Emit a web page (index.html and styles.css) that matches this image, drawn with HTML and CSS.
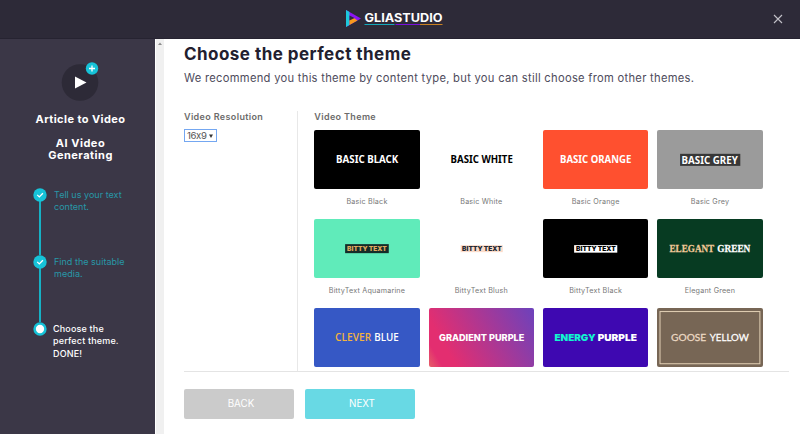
FILE: index.html
```html
<!DOCTYPE html>
<html lang="en">
<head>
<meta charset="utf-8">
<title>GliaStudio</title>
<link rel="stylesheet" href="styles.css">
</head>
<body>
<header class="topbar">
  <svg class="logo" width="98" height="18" viewBox="0 0 98 18">
    <path d="M0 0L15 8.5L0 17Z" fill="#8b14f5"/>
    <path d="M0 0L3.5 2V15L0 17Z" fill="#1cc8dc"/>
    <path d="M3.5 10L8 8L11.5 10.5L3.5 15Z" fill="#f79a1c"/>
    <path d="M3.5 5.5L8.5 8L3.5 10.5Z" fill="#2d2a38"/>
    <text x="18.5" y="11.8" class="logo-text" textLength="78" lengthAdjust="spacingAndGlyphs">GLIASTUDIO</text>
    <path d="M18.5 14.500h30" stroke="#15a9bb"/>
    <path d="M49.500 14.500h24.500" stroke="#7a10dc"/>
    <path d="M74 14.500h22.500" stroke="#c98122"/>
  </svg>
  <svg class="close" width="10" height="10" viewBox="0 0 10 10"><path d="M1 1L9 9M9 1L1 9" stroke="#c2c1c8" stroke-width="1.100"/></svg>
</header>
<div class="body">
  <aside class="sidebar">
    <svg class="badge" width="38" height="40" viewBox="0 0 38 40">
      <circle cx="19" cy="21.500" r="18.300" fill="#2d2a37"/>
      <path d="M14 15.500L25.500 21.500L14 27.500Z" fill="#fff"/>
      <circle cx="31" cy="7.500" r="6.200" fill="#16c3d8"/>
      <path d="M28 7.500h6M31 4.500v6" stroke="#fff" stroke-width="1.300"/>
    </svg>
    <h2 class="kind">Article to Video</h2>
    <h2 class="mode">AI Video<br>Generating</h2>
    <ol class="steps">
      <li class="step">
        <svg class="dot" width="14" height="14" viewBox="0 0 14 14"><circle cx="7" cy="7" r="6.700" fill="#16c3d8"/><path d="M4.200 6.900L6.300 8.900L9.900 5.200" fill="none" stroke="#fff" stroke-width="1.300"/></svg>
        <span>Tell us your text<br>content.</span>
      </li>
      <li class="step">
        <svg class="dot" width="14" height="14" viewBox="0 0 14 14"><circle cx="7" cy="7" r="6.700" fill="#16c3d8"/><path d="M4.200 6.900L6.300 8.900L9.900 5.200" fill="none" stroke="#fff" stroke-width="1.300"/></svg>
        <span>Find the suitable<br>media.</span>
      </li>
      <li class="step current">
        <svg class="dot" width="14" height="14" viewBox="0 0 14 14"><circle cx="7" cy="7" r="5.400" fill="#fff" stroke="#16c3d8" stroke-width="2.500"/></svg>
        <span>Choose the<br>perfect theme.<br>DONE!</span>
      </li>
    </ol>
  </aside>
  <div class="scrollbar"><svg width="4" height="3" viewBox="0 0 4 3"><path d="M0 3L2 .5L4 3Z" fill="#8c8c8c"/></svg></div>
  <main class="main">
    <h1 class="title">Choose the perfect theme</h1>
    <p class="lead">We recommend you this theme by content type, but you can still choose from other themes.</p>
    <div class="panel">
      <section class="resolution">
        <h3 class="label">Video Resolution</h3>
        <div class="select"><span>16x9</span><svg width="4" height="4" viewBox="0 0 4 4"><path d="M0 .5H4L2 4Z" fill="#333"/></svg></div>
      </section>
      <section class="themes">
        <h3 class="label">Video Theme</h3>
        <div class="grid">
          <figure class="card"><svg class="thumb black" viewBox="0 0 105 59"><text class="basic" x="22" y="33" textLength="62" lengthAdjust="spacingAndGlyphs">BASIC BLACK</text></svg><figcaption>Basic Black</figcaption></figure>
          <figure class="card"><svg class="thumb white" viewBox="0 0 105 59"><text class="basic ink" x="21.500" y="33" textLength="62" lengthAdjust="spacingAndGlyphs">BASIC WHITE</text></svg><figcaption>Basic White</figcaption></figure>
          <figure class="card"><svg class="thumb orange" viewBox="0 0 105 59"><text class="basic" x="17" y="33" textLength="71" lengthAdjust="spacingAndGlyphs">BASIC ORANGE</text></svg><figcaption>Basic Orange</figcaption></figure>
          <figure class="card"><svg class="thumb grey" viewBox="0 0 105 59"><rect x="23" y="23.700" width="60" height="12" fill="#373737"/><text class="basic" x="24.500" y="33.700" textLength="56" lengthAdjust="spacingAndGlyphs">BASIC GREY</text></svg><figcaption>Basic Grey</figcaption></figure>
          <figure class="card"><svg class="thumb aqua" viewBox="0 0 105 59"><rect x="31" y="25" width="43.500" height="9" fill="#152c29"/><text class="bitty" x="33" y="32" fill="#dfa95e" textLength="39.500" lengthAdjust="spacingAndGlyphs">BITTY TEXT</text></svg><figcaption>BittyText Aquamarine</figcaption></figure>
          <figure class="card"><svg class="thumb white" viewBox="0 0 105 59"><rect x="31.500" y="26" width="42" height="7" fill="#fbdccb"/><text class="bitty" x="33" y="32" fill="#222831" textLength="39.500" lengthAdjust="spacingAndGlyphs">BITTY TEXT</text></svg><figcaption>BittyText Blush</figcaption></figure>
          <figure class="card"><svg class="thumb black" viewBox="0 0 105 59"><rect x="31" y="26" width="43" height="7.500" fill="#fff"/><text class="bitty" x="33" y="32" fill="#000" textLength="39.500" lengthAdjust="spacingAndGlyphs">BITTY TEXT</text></svg><figcaption>BittyText Black</figcaption></figure>
          <figure class="card"><svg class="thumb green" viewBox="0 0 105 59"><text class="elegant" x="12.500" y="32.800" fill="#f1c998" stroke="#f1c998" textLength="44.500" lengthAdjust="spacingAndGlyphs">ELEGANT</text><text class="elegant" x="60" y="32.800" fill="#fff" stroke="#fff" textLength="33" lengthAdjust="spacingAndGlyphs">GREEN</text></svg><figcaption>Elegant Green</figcaption></figure>
          <figure class="card"><svg class="thumb blue" viewBox="0 0 105 59"><text class="clever" x="21" y="33" fill="#f3b33d" textLength="36" lengthAdjust="spacingAndGlyphs">CLEVER</text><text class="clever" x="60" y="33" fill="#fff" textLength="24.500" lengthAdjust="spacingAndGlyphs">BLUE</text></svg></figure>
          <figure class="card"><svg class="thumb gradient" viewBox="0 0 105 59"><text class="heavy" x="10" y="33" fill="#fff" textLength="85" lengthAdjust="spacingAndGlyphs">GRADIENT PURPLE</text></svg></figure>
          <figure class="card"><svg class="thumb purple" viewBox="0 0 105 59"><text class="energy" x="11.500" y="33" fill="#12f5cf" textLength="41" lengthAdjust="spacingAndGlyphs">ENERGY</text><text class="energy" x="54.500" y="33" fill="#fff" textLength="39" lengthAdjust="spacingAndGlyphs">PURPLE</text></svg></figure>
          <figure class="card"><svg class="thumb goose" viewBox="0 0 105 59"><rect x="3" y="3.500" width="99.500" height="52" fill="none" stroke="#e2d0b5"/><text class="light" x="14" y="33" fill="#eddac4" stroke="#eddac4" textLength="35" lengthAdjust="spacingAndGlyphs">GOOSE</text><text class="light" x="52.500" y="33" fill="#fff" stroke="#fff" textLength="39" lengthAdjust="spacingAndGlyphs">YELLOW</text></svg></figure>
        </div>
      </section>
    </div>
    <div class="actions">
      <button class="btn back">BACK</button>
      <button class="btn next">NEXT</button>
    </div>
  </main>
</div>
</body>
</html>
```
FILE: styles.css
```css
* { box-sizing: border-box; margin: 0; padding: 0; }
body { width: 800px; height: 434px; overflow: hidden; background: #fff; font-family: Inter, "Open Sans", sans-serif; color: #4b4a55; }
svg { display: block; }
.topbar { height: 39px; background: #2d2a38; border-bottom: 1px solid #262331; display: grid; grid-template-columns: 346px 1fr 27px; align-items: center; }
.logo { grid-column: 2; overflow: visible; }
.logo-text { font: 700 11.6px Inter, sans-serif; fill: #fff; }
.close { grid-column: 3; }
.body { display: flex; height: 395px; }
.sidebar { width: 155px; background: #3b3747; color: #fff; }
.badge { margin: 22px 0 0 61px; }
.kind, .mode { font-size: 11px; line-height: 12px; font-weight: 700; text-align: center; padding-left: 6px; }
.kind { margin-top: 12px; letter-spacing: .42px; }
.mode { margin-top: 12px; letter-spacing: .5px; }
.steps { list-style: none; margin: 27px 0 0 33px; }
.step { height: 67px; display: flex; gap: 7px; color: #2897a8; font-size: 9px; line-height: 12.3px; letter-spacing: .02px; background: linear-gradient(#16b1c4, #16b1c4) 6px 7px / 2px 67px no-repeat; }
.step.current { color: #fff; gap: 6px; background: none; font-weight: 500; letter-spacing: .17px; }
.step span { padding-top: 1px; white-space: nowrap; }
.dot { flex: none; }
.scrollbar { width: 9px; background: #f0f0f0; border-left: 1px solid #fff; padding: 3px 0 0 2px; }
.main { flex: 1; padding: 3px 11px 0 20px; }
.title { font-size: 17px; line-height: 24px; font-weight: 700; letter-spacing: .46px; color: #22202f; white-space: nowrap; }
.lead { margin-top: 3px; font-size: 11.200px; line-height: 18px; letter-spacing: .28px; color: #4e4b5c; white-space: nowrap; }
.panel { display: flex; height: 261px; margin-top: 24.400px; border-bottom: 1px solid #e4e4e4; }
.resolution { width: 114px; border-right: 1px solid #e8e8e8; }
.themes { flex: 1; padding-left: 16.300px; }
.label { font-size: 9px; line-height: 12px; font-weight: 600; letter-spacing: .36px; color: #6c6b6b; white-space: nowrap; }
.select { width: 33px; height: 13px; margin-top: 6px; border: 1px solid #74a7f1; display: flex; align-items: center; justify-content: space-between; padding: 0 3px 0 2px; font-size: 9.600px; line-height: 11px; letter-spacing: -.4px; font-feature-settings: "calt" 0; color: #555; }
.grid { margin-top: 6.500px; display: grid; grid-template-columns: repeat(4, 105.400px); grid-auto-rows: 88.850px; column-gap: 8.950px; }
.thumb { width: 105.400px; height: 59.300px; border-radius: 2px; }
.card figcaption { margin-top: 6.500px; font-size: 7.200px; line-height: 12px; letter-spacing: .2px; text-align: center; color: #777; }
.black { background: #000; }
.white { background: #fff; }
.orange { background: #ff502f; }
.grey { background: #9b9b9b; }
.aqua { background: #60ebba; }
.green { background: #073b22; }
.blue { background: #3658c5; }
.gradient { background: linear-gradient(60deg, #e66068 0, #e32e70 10%, #e32e70 20%, #6c42bc 100%); }
.purple { background: #3e08b1; }
.goose { background: #776655; }
.basic { font: 700 10.500px "Noto Sans", sans-serif; fill: #fff; }
.ink { fill: #000; }
.bitty { font: 900 6.600px Inter, sans-serif; }
.elegant { font: 700 10.500px "Liberation Serif", serif; stroke-width: .25px; }
.clever { font: 600 10px "Open Sans", sans-serif; }
.heavy { font: 800 9.300px Inter, sans-serif; }
.energy { font: 900 9.600px Inter, sans-serif; }
.light { font: 400 9.700px Lato, sans-serif; stroke-width: .25px; }
.actions { display: flex; gap: 11px; margin-top: 16.500px; }
.btn { width: 110px; height: 30px; border: 0; border-radius: 2px; color: #fff; font: 400 9.800px Inter, sans-serif; padding-left: 4px; }
.back { background: #cbcbcb; }
.next { background: #68d9e4; }
```
